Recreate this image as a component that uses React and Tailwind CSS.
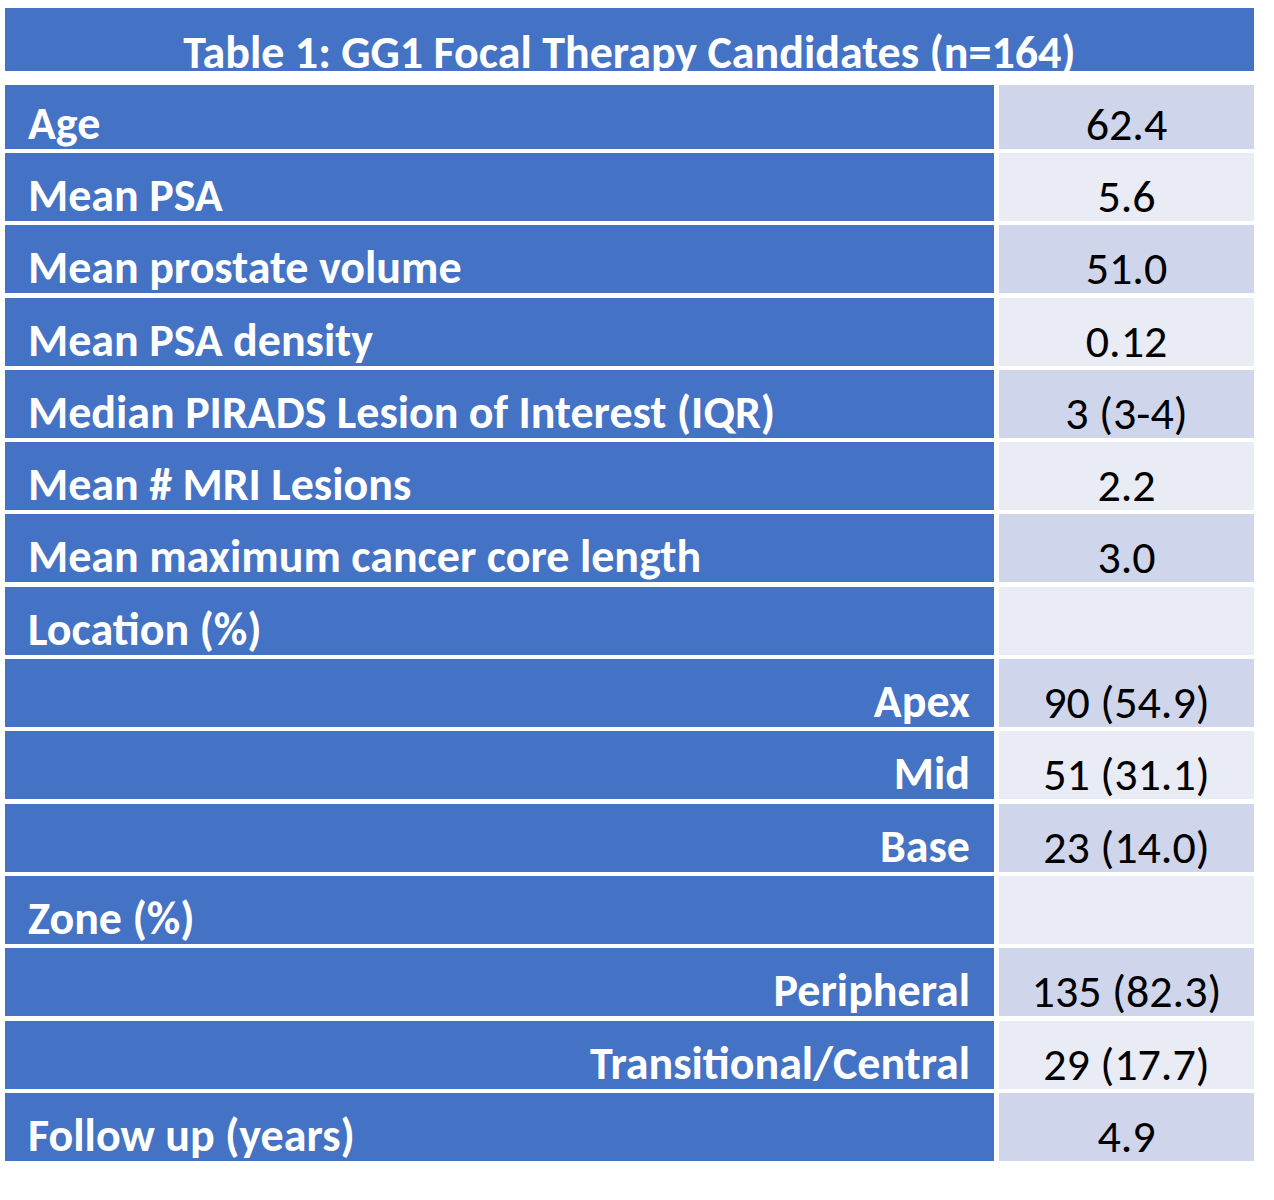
import React from "react";

const rows = [
  { label: "Age", value: "62.4", sub: false },
  { label: "Mean PSA", value: "5.6", sub: false },
  { label: "Mean prostate volume", value: "51.0", sub: false },
  { label: "Mean PSA density", value: "0.12", sub: false },
  { label: "Median PIRADS Lesion of Interest (IQR)", value: "3 (3-4)", sub: false },
  { label: "Mean # MRI Lesions", value: "2.2", sub: false },
  { label: "Mean maximum cancer core length", value: "3.0", sub: false },
  { label: "Location (%)", value: "", sub: false },
  { label: "Apex", value: "90 (54.9)", sub: true },
  { label: "Mid", value: "51 (31.1)", sub: true },
  { label: "Base", value: "23 (14.0)", sub: true },
  { label: "Zone (%)", value: "", sub: false },
  { label: "Peripheral", value: "135 (82.3)", sub: true },
  { label: "Transitional/Central", value: "29 (17.7)", sub: true },
  { label: "Follow up (years)", value: "4.9", sub: false },
];

export default function App() {
  return (
    <div
      className="w-[1274px] h-[1200px] bg-white pt-[8px] pl-[5px]"
      style={{ fontFamily: "Carlito, Calibri, 'Open Sans', sans-serif" }}
    >
      <div className="w-[1249px] h-[63px] bg-[#4472C4] flex items-end justify-center">
        <span className="text-white font-bold text-[46px] leading-none whitespace-nowrap -mb-[4px]">
          Table 1: GG1 Focal Therapy Candidates (n=164)
        </span>
      </div>
      <div className="mt-[14px] grid grid-cols-[989px_255px] gap-x-[5px] gap-y-[4.3px]">
        {rows.map((r, i) => {
          const h = i === 0 ? "h-[63.7px]" : "h-[68px]";
          const light = i % 2 === 0 ? "bg-[#CFD5EA]" : "bg-[#E9EBF5]";
          return (
            <React.Fragment key={i}>
              <div
                className={`${h} bg-[#4472C4] flex items-end pb-[3px] ${
                  r.sub ? "justify-end pr-[24px]" : "justify-start pl-[23px]"
                }`}
              >
                <span className="text-white font-bold text-[46px] leading-none whitespace-nowrap">
                  {r.label}
                </span>
              </div>
              <div className={`${h} ${light} flex items-end justify-center pb-[2px]`}>
                <span className="text-black text-[46px] leading-none whitespace-nowrap">
                  {r.value}
                </span>
              </div>
            </React.Fragment>
          );
        })}
      </div>
    </div>
  );
}
